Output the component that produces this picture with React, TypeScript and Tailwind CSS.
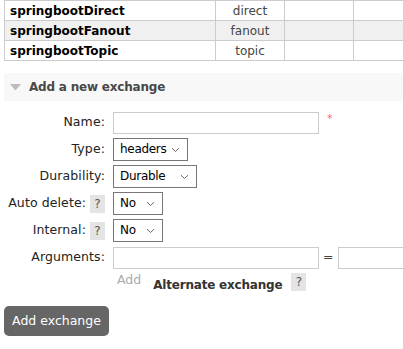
import React from "react";

const FONT = { fontFamily: '"DejaVu Sans", Verdana, sans-serif' };

const rows = [
  { name: "springbootDirect", type: "direct" },
  { name: "springbootFanout", type: "fanout" },
  { name: "springbootTopic", type: "topic" },
];

function Chevron() {
  return (
    <svg width="9" height="6" viewBox="0 0 9 6" className="pointer-events-none absolute right-[7px] top-1/2 -translate-y-1/2">
      <path d="M1 1.2 L4.5 4.5 L8 1.2" fill="none" stroke="#666" strokeWidth="1" />
    </svg>
  );
}

function Sel({ value, w }: { value: string; w: string }) {
  return (
    <div className={`relative h-[23px] ${w} border border-[#767676] bg-white`}>
      <div className="pl-[6px] leading-[21px] text-[12px] tracking-[-0.3px] text-black">{value}</div>
      <Chevron />
    </div>
  );
}

function Help() {
  return <span className="inline-block w-[15px] h-[18px] bg-[#e4e4e4] text-[#555] text-[12px] leading-[18px] text-center tracking-normal">?</span>;
}

export default function App() {
  return (
    <div className="w-[403px] h-[349px] overflow-hidden bg-white text-[12px] text-[#222]" style={FONT}>
      <table className="ml-[4px] border-collapse w-[480px] table-fixed">
        <colgroup>
          <col className="w-[211px]" />
          <col className="w-[69px]" />
          <col className="w-[69px]" />
          <col />
        </colgroup>
        <tbody>
          {rows.map((r, i) => (
            <tr key={r.name} className={`h-[20px] ${i === 1 ? "bg-[#f0f0f0]" : "bg-white"}`}>
              <td className="border border-[#ccc] pl-[5px] py-0 leading-[16px] font-bold text-[12px] text-black">{r.name}</td>
              <td className="border border-[#ccc] py-0 leading-[16px] text-center text-[12px] text-[#444]">{r.type}</td>
              <td className="border border-[#ccc]"></td>
              <td className="border border-[#ccc]"></td>
            </tr>
          ))}
        </tbody>
      </table>

      <div className="ml-[4px] mt-[12px] h-[28px] bg-[#f8f8f8] flex items-center">
        <svg width="11" height="7" viewBox="0 0 11 7" className="ml-[6px]">
          <path d="M0 0 H11 L5.5 6.5 Z" fill="#bbb" />
        </svg>
        <span className="ml-[8px] font-bold text-[12px] tracking-[-0.2px] text-[#484848]">Add a new exchange</span>
      </div>

      <div className="mt-[10px] grid grid-cols-[105px_1fr] gap-x-[8px] gap-y-[4px] items-center text-[12.5px] tracking-[0.1px]">
        <div className="text-right">Name:</div>
        <div className="flex items-center h-[23px]">
          <div className="w-[206px] h-[22px] border border-[#ccc] bg-white" />
          <span className="ml-[8px] text-[#f66] text-[11px] -mt-[6px]">*</span>
        </div>

        <div className="text-right">Type:</div>
        <Sel value="headers" w="w-[75px]" />

        <div className="text-right">Durability:</div>
        <Sel value="Durable" w="w-[84px]" />

        <div className="flex justify-end items-center gap-[4px]">
          <span>Auto delete:</span>
          <Help />
        </div>
        <Sel value="No" w="w-[50px]" />

        <div className="flex justify-end items-center gap-[4px]">
          <span>Internal:</span>
          <Help />
        </div>
        <Sel value="No" w="w-[50px]" />

        <div className="text-right">Arguments:</div>
        <div className="flex items-center h-[23px]">
          <div className="w-[206px] h-[22px] border border-[#ccc] bg-white shrink-0" />
          <span className="mx-[4px] text-[#444]">=</span>
          <div className="w-[80px] h-[22px] border border-[#ccc] bg-white shrink-0" />
        </div>

        <div />
        <div className="flex items-start tracking-normal">
          <span className="ml-[4px] text-[#aaa] text-[12.5px] mt-[-2px]">Add</span>
          <span className="ml-[12px] mt-[3px] font-bold text-[12px] tracking-[-0.2px] text-[#333]">Alternate exchange</span>
          <span className="ml-[9px]"><Help /></span>
        </div>
      </div>

      <button className="ml-[4px] mt-[12px] w-[105px] h-[30px] rounded-[5px] bg-[#666] text-white text-[12.5px]">
        Add exchange
      </button>
    </div>
  );
}
